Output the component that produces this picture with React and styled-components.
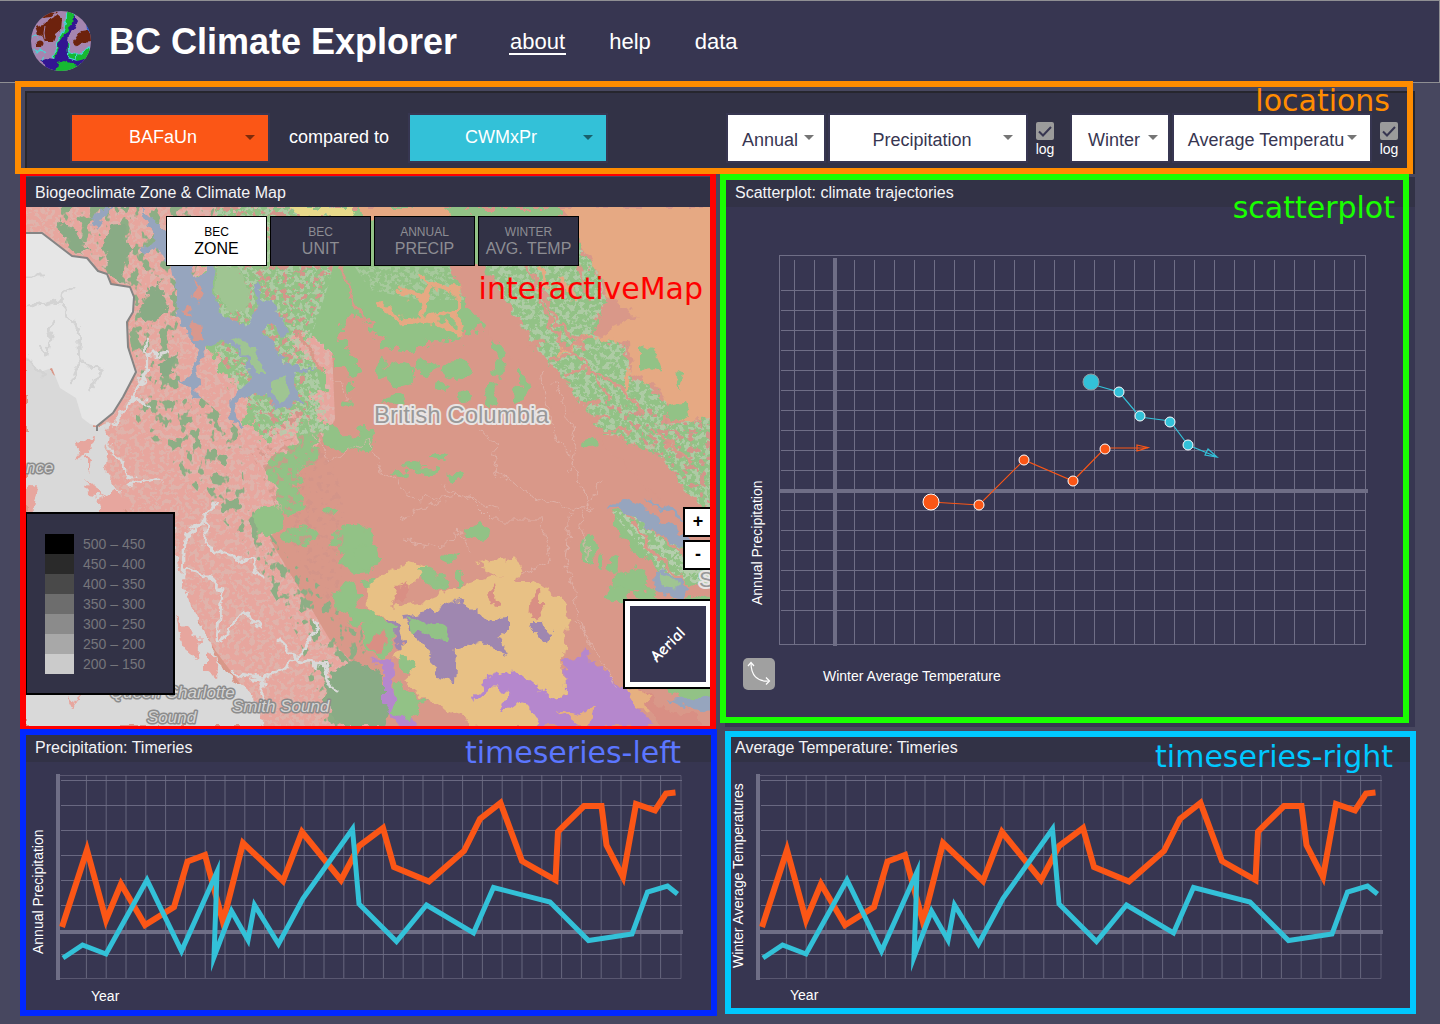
import React from 'react';
import styled, { createGlobalStyle } from 'styled-components';

const SANS = '"Liberation Sans", Arial, Helvetica, sans-serif';
const INDIGO = '#373651';
const SLATE = '#323246';
const ORANGE = '#fb5616';
const TEAL = '#33c1d8';
const GRID = '#6f6e86';

const GlobalStyle = createGlobalStyle`
  *, *::before, *::after { box-sizing: border-box; }
  body {
    margin: 0;
    background: #47475f;
    color: #fff;
    font-family: ${SANS};
  }
  button, select, input { font-family: inherit; margin: 0; }
`;

const Page = styled.div`
  min-height: 100vh;
  padding-bottom: 12px;
`;

const Header = styled.header`
  display: flex;
  align-items: center;
  height: 83px;
  padding: 0 30px;
  background: ${INDIGO};
  border: 1px solid #8f8f93;
  border-left: 0;
`;

const Brand = styled.h1`
  margin: 0 52px 0 17px;
  font-size: 36px;
  line-height: 40px;
  font-weight: 700;
  white-space: nowrap;
`;

const Nav = styled.nav`
  display: flex;
  gap: 42px;
`;

const NavLink = styled.a`
  padding: 2px 1px 0;
  font-size: 22px;
  line-height: 22px;
  color: #fff;
  text-decoration: none;
  border-bottom: 2px solid ${(p) => (p.$current ? '#fff' : 'transparent')};
`;

const Main = styled.main`
  display: grid;
  grid-template-columns: minmax(0, 1fr) minmax(0, 1fr);
  column-gap: 10px;
  row-gap: 5px;
  padding: 8px 25px 0;
`;

/* Coloured outline naming a region; it is drawn over the region's edges. */
const Outline = styled.div`
  position: absolute;
  inset: ${(p) => p.$inset};
  z-index: ${(p) => p.$level || 1};
  border: 6px solid ${(p) => p.$color};
  pointer-events: none;
`;

const OutlineLabel = styled.span`
  position: absolute;
  top: ${(p) => p.$top}px;
  right: ${(p) => p.$right}px;
  font-family: "DejaVu Sans", sans-serif;
  font-size: 30px;
  line-height: 30px;
  white-space: nowrap;
  color: ${(p) => p.$color};
`;

const Region = ({ name, color, ink, inset, top, right, level }) => (
  <Outline $inset={inset} $color={color} $level={level}>
    <OutlineLabel $color={ink || color} $top={top} $right={right}>{name}</OutlineLabel>
  </Outline>
);

const Locations = styled.section`
  position: relative;
  grid-column: 1 / -1;
  display: flex;
  align-items: flex-start;
  justify-content: space-between;
  height: 83px;
  padding: 22px 14px 0 45px;
  background: ${SLATE};
  border: 2px solid #26262e;
`;

const Group = styled.div`
  display: flex;
  align-items: flex-start;
  gap: ${(p) => p.$gap}px;
`;

const Joiner = styled.span`
  font-size: 18px;
  line-height: 44px;
`;

const SelectBox = styled.div`
  position: relative;
  width: ${(p) => (p.$small ? 96 : 196)}px;
  height: 46px;
  box-shadow: 0 0 0 2px ${INDIGO};
`;

const Select = styled.select`
  appearance: none;
  width: 100%;
  height: 100%;
  border: 0;
  border-radius: 0;
  padding: ${(p) => (p.$bg ? '0 14px 2px 0' : '4px 12px 0 0')};
  background: ${(p) => p.$bg || '#fff'};
  color: ${(p) => (p.$bg ? '#fff' : INDIGO)};
  font-size: 18px;
  line-height: 20px;
  text-align: center;
  text-align-last: center;
`;

const Caret = styled.svg`
  position: absolute;
  top: 20px;
  right: ${(p) => (p.$small ? 10 : 13)}px;
  width: 10px;
  height: 5px;
  pointer-events: none;
`;

const Picker = ({ label, value, bg, small }) => (
  <SelectBox $small={small}>
    <Select aria-label={label} defaultValue={value} $bg={bg}>
      <option>{value}</option>
    </Select>
    <Caret viewBox="0 0 10 5" $small={small} aria-hidden="true">
      <path d="M0 0H10L5 5Z" fill={bg ? '#000' : '#757575'} fillOpacity={bg ? 0.5 : 1} />
    </Caret>
  </SelectBox>
);

const LogLabel = styled.label`
  display: grid;
  justify-items: center;
  width: 20px;
  margin: 7px 0 0 3px;
  font-size: 14px;
  line-height: 19px;
`;

const LogInput = styled.input`
  appearance: none;
  grid-area: 1 / 1;
  width: 18px;
  height: 18px;
  border-radius: 2px;
  background: #9b9b9b;
`;

const Tick = styled.svg`
  grid-area: 1 / 1;
  width: 18px;
  height: 18px;
  pointer-events: none;
`;

const LogToggle = () => (
  <LogLabel>
    <LogInput type="checkbox" defaultChecked />
    <Tick viewBox="0 0 18 18" aria-hidden="true">
      <path d="M3 9.5L7 13.5L15 5" fill="none" stroke={INDIGO} strokeWidth="2" />
    </Tick>
    <span>log</span>
  </LogLabel>
);

const Panel = styled.section`
  position: relative;
  margin-top: ${(p) => (p.$raised ? -2 : 0)}px;
  background: ${INDIGO};
`;

const PanelTitle = styled.h2`
  margin: 0;
  height: 30px;
  padding: 0 10px;
  background: ${SLATE};
  font-size: 16px;
  line-height: 32px;
  font-weight: 400;
  color: #f4f4f6;
`;

const Drawing = styled.svg`
  display: block;
  width: 100%;
  height: auto;
  font-family: ${SANS};
`;

const MapBody = styled.div`
  position: relative;
  overflow: hidden;
`;

const LayerTabs = styled.div`
  position: absolute;
  top: 9px;
  left: 141px;
  display: flex;
  gap: 3px;
`;

const LayerTab = styled.button`
  display: flex;
  flex-direction: column;
  align-items: center;
  justify-content: center;
  gap: 1px;
  width: 101px;
  height: 50px;
  padding: 1px 0 0;
  border: 1px solid #000;
  background: ${(p) => (p.$active ? '#fff' : SLATE)};
  color: ${(p) => (p.$active ? '#000' : '#8d8d93')};
  font-size: 16px;
  line-height: 18px;
`;

const TabKicker = styled.span`
  font-size: 12px;
  line-height: 14px;
`;

const Legend = styled.ul`
  position: absolute;
  left: 0;
  bottom: 31px;
  width: 150px;
  height: 183px;
  margin: 0;
  padding: 20px 0 0 18px;
  border: 2px solid #000;
  background: ${SLATE};
  list-style: none;
`;

const LegendItem = styled.li`
  display: flex;
  gap: 9px;
  height: 20px;
  font-size: 14px;
  line-height: 20px;
  color: #75757b;
`;

const Swatch = styled.span`
  width: 29px;
  background: ${(p) => p.$color};
`;

const ZoomStack = styled.div`
  position: absolute;
  top: 300px;
  right: 0;
  display: grid;
  gap: 3px;
`;

const ZoomButton = styled.button`
  width: 32px;
  height: 30px;
  padding: 0 2px 2px 0;
  border: 2px solid #000;
  background: #fff;
  color: #000;
  font-size: 18px;
  line-height: 20px;
  font-weight: 700;
`;

const AerialButton = styled.button`
  position: absolute;
  top: 392px;
  right: 0;
  display: flex;
  width: 92px;
  height: 90px;
  padding: 5px 7px 5px 5px;
  border: 2px solid #000;
  background: #fff;
`;

const AerialView = styled.span`
  display: grid;
  place-items: center;
  flex: 1;
  background: ${INDIGO};
  color: #fff;
  font-family: "Comic Neue", "Comic Sans MS", Lato, sans-serif;
  font-size: 17px;
  font-weight: 700;
`;

const Tilted = styled.span`
  transform: rotate(-45deg);
`;

const CurveButton = styled.button`
  position: absolute;
  left: 18px;
  bottom: 37px;
  width: 32px;
  height: 32px;
  padding: 0;
  border: 0;
  border-radius: 5px;
  background: #a0a0a0;
`;

const LogoMark = styled.svg`
  flex: none;
  width: 62px;
  height: 62px;
`;

const Logo = () => (
  <LogoMark viewBox="-1 0 62 62" aria-hidden="true">
    <defs>
      <clipPath id="disc"><circle cx="30" cy="30" r="30" /></clipPath>
      <filter id="logoRough" x="-10%" y="-10%" width="120%" height="120%">
        <feTurbulence type="fractalNoise" baseFrequency="0.16" numOctaves="2" seed="4" />
        <feDisplacementMap in="SourceGraphic" scale="5" xChannelSelector="R" yChannelSelector="G" />
      </filter>
    </defs>
    <g clipPath="url(#disc)">
      <rect width="60" height="60" fill="#a585b0" />
      <g filter="url(#logoRough)" strokeWidth="1.2" stroke="#49d5d5">
        <path d="M36 -2L44 2L43 12L39 20L35 28L38 34L37 40L48 44L58 36L62 44L60 64L16 62L26 50L20 46L26 38L27 28L32 20L35 10Z" fill="#12b932" />
        <path d="M43 4L47 10L43 19L38 24L36 34L37 42L46 50L54 48L58 52L46 54L34 50L27 52L25 62L18 58L8 50L16 47L22 48L28 40L27 32L31 26L37 20L41 12Z" fill="#321492" stroke="none" />
        <path d="M36 42L46 42L45 49L38 47Z" fill="#12b932" />
        <path d="M11 7L16 0L26 1L20 6ZM4 15L12 13L19 8L26 4L31 8L30 19L25 23L22 31L15 31L13 25L7 23Z" fill="#6d2408" stroke="none" />
        <path d="M42 31L46 25L50 20L56 19L61 25L60 31L50 32L44 36Z" fill="#6d2408" stroke="none" />
        <circle cx="9" cy="33" r="3.5" fill="#6d2408" stroke="none" />
        <path d="M0 27L5 24L7 30M1 38L6 42L10 39L14 42M10 51L14 45" fill="none" />
      </g>
      <path d="M55 11L60 18L61 24L56 18Z" fill="#1a55dd" />
      <path d="M14 15L13 22L14 28" stroke="#a585b0" fill="none" />
    </g>
  </LogoMark>
);

const SPECKS = [
  { id: 'spkDark', color: '#8dae85', freq: '0.1 0.08', seed: 3, cut: -8.9, gain: 16 },
  { id: 'spkGrey', color: '#d9c0b8', freq: '0.2', seed: 8, cut: -7.6, gain: 15 },
  { id: 'spkRed', color: '#d3958a', freq: '0.17', seed: 15, cut: -8.6, gain: 15 },
  { id: 'spkPale', color: '#b4ceac', freq: '0.2', seed: 21, cut: -7.4, gain: 15 },
];

const ISLETS = [
  [345, 444, 16, 7], [332, 436, 8, 10], [308, 432, 12, 14], [302, 455, 16, 12], [284, 470, 18, 18], [290, 500, 14, 16],
  [268, 520, 14, 16], [300, 535, 18, 10], [352, 540, 22, 14], [360, 560, 18, 12], [330, 512, 7, 5], [347, 598, 13, 16],
  [362, 616, 16, 8], [366, 440, 9, 13], [382, 370, 6, 10], [400, 374, 14, 12], [426, 368, 11, 7], [456, 370, 16, 9],
  [440, 388, 6, 6], [466, 396, 7, 6], [394, 400, 10, 6], [502, 344, 10, 14], [500, 368, 8, 10], [525, 372, 6, 18],
  [520, 394, 8, 8], [490, 396, 6, 12], [440, 456, 9, 4], [412, 465, 10, 4], [426, 471, 12, 4], [400, 474, 8, 3],
  [455, 477, 8, 4], [478, 532, 13, 8], [366, 556, 12, 12], [370, 584, 9, 4], [424, 572, 10, 6], [440, 584, 9, 8],
  [459, 578, 4, 9], [450, 558, 7, 6], [589, 548, 7, 14], [601, 562, 3, 9], [614, 566, 5, 9], [632, 580, 17, 12],
  [618, 594, 12, 10], [646, 596, 12, 8], [558, 399, 4, 3], [590, 442, 9, 5], [347, 404, 4, 3], [350, 388, 4, 3],
];

const AREA = {
  coast: 'M97 431L134 380L128 330L134 296L108 276L60 250L25 232V207H345L330 300L335 420L300 470L270 540L330 640L370 680L380 727H258L245 690L215 650L186 600L120 500L104 470Z',
  coastForest: 'M60 207H215L196 270L176 330L180 380L240 430L245 500L290 560L360 620L380 727H320L300 640L240 540L170 460L136 420L136 372L128 330L130 285L60 240Z',
  inlandGreen: 'M215 207H560L545 250L500 270L510 300L480 330L450 340L420 345L408 352L382 348L372 325L350 312L338 330L360 370L352 382L320 340L300 330L290 345L310 365L325 370L330 390L310 395L325 425L340 440L335 445L308 420L300 410L280 425L265 440L258 428L245 425L246 400L225 370L205 345L212 300L200 290L214 230Z',
  rockies: 'M486 266L520 250L575 240L600 275L606 300L590 334L625 345L632 375L668 400L660 425L715 417V510L690 505L650 450L594 430L567 384L533 350L505 302Z',
  orange: 'M560 207H715V418L671 421L661 388L632 372L628 344L594 338L636 316L607 294L597 270L573 227Z',
};

const ClimateMap = () => (
  <Drawing viewBox="25 207 690 519" role="img" aria-label="Map of British Columbia coloured by zone">
    <defs>
      <filter id="rough" x="-5%" y="-5%" width="110%" height="110%">
        <feTurbulence type="fractalNoise" baseFrequency="0.09" numOctaves="3" seed="7" />
        <feDisplacementMap in="SourceGraphic" scale="14" xChannelSelector="R" yChannelSelector="G" />
      </filter>
      <filter id="ragged" x="-5%" y="-5%" width="110%" height="110%">
        <feTurbulence type="fractalNoise" baseFrequency="0.12" numOctaves="3" seed="12" />
        <feDisplacementMap in="SourceGraphic" scale="24" xChannelSelector="R" yChannelSelector="G" />
      </filter>
      {SPECKS.map((s) => (
        <filter key={s.id} id={s.id} x="0" y="0" width="100%" height="100%" colorInterpolationFilters="sRGB">
          <feTurbulence type="fractalNoise" baseFrequency={s.freq} numOctaves="3" seed={s.seed} />
          <feColorMatrix values={`0 0 0 0 0  0 0 0 0 0  0 0 0 0 0  ${s.gain} 0 0 0 ${s.cut}`} result="m" />
          <feFlood floodColor={s.color} />
          <feComposite in2="m" operator="in" result="f" />
          <feComposite in="f" in2="SourceGraphic" operator="in" />
        </filter>
      ))}
    </defs>

    <rect x="25" y="207" width="690" height="520" fill="#d99889" />
    <path d={AREA.coast} fill="#e7a69e" />
    <path d={AREA.coast} fill="#000" filter="url(#spkGrey)" opacity="0.5" />
    <path d={AREA.coastForest} fill="#000" filter="url(#spkDark)" />
    <g filter="url(#rough)" fill="#89ab85">
      <path d="M108 227L125 225L130 250L122 285L112 275L104 250ZM150 290L162 285L168 310L155 322L140 318L138 308ZM160 365L178 355L172 372L160 376ZM60 222L75 230L90 250L78 252L62 238Z" />
      <path d="M350 660L375 668L395 700L385 727H345L322 700L332 676Z" />
    </g>

    <g filter="url(#ragged)">
      <path d={AREA.inlandGreen} fill="#92c286" />
      <path d={AREA.rockies} fill="#92c286" />
    </g>
    <g filter="url(#rough)" fill="#92c286">
      {ISLETS.map(([x, y, rx, ry]) => <ellipse key={`${x}-${y}`} cx={x} cy={y} rx={rx} ry={ry} />)}
      <path d="M612 512L632 508L662 528L690 548L715 562V580L690 585L660 572L634 550L618 534ZM668 600L700 596L715 600V625H690Z" />
      <path d="M640 660L715 690V712L680 700Z" />
    </g>
    <path d="M215 207H345L330 280L310 340L330 430L265 440L246 400L215 350Z" fill="#000" filter="url(#spkPale)" opacity="0.8" />
    <path d="M215 207H345L330 280L300 340L310 420L265 440L246 400L215 350Z" fill="#000" filter="url(#spkRed)" />
    <path d="M258 300L282 290L300 330L284 350Z" fill="#000" filter="url(#spkRed)" />
    <path d={AREA.rockies} fill="#000" filter="url(#spkPale)" opacity="0.8" />
    <path d="M355 267H450L465 300L420 300L370 290Z" fill="#000" filter="url(#spkPale)" opacity="0.6" />
    <path d="M250 450L320 430L345 500L340 620L300 560Z" fill="#000" filter="url(#spkRed)" opacity="0.7" />
    <path d="M600 400L715 420V510L660 460Z" fill="#000" filter="url(#spkRed)" />
    <path d="M612 512L632 508L715 562V590L660 572Z" fill="#000" filter="url(#spkPale)" />

    <g filter="url(#rough)">
      <path d={AREA.orange} fill="#e6a983" />
      <path d="M360 207H446L452 222H400L362 216Z" fill="#e6a983" />
      <path d="M290 207H355L350 220L325 216L300 220Z" fill="#e8d98a" />
      <path d="M640 345L655 350L662 372L650 366L640 372ZM676 372L684 376L680 392ZM662 405L684 402L690 415L672 422Z" fill="#92c286" />
      <path d="M448 262L482 264L512 310L540 353L575 395L606 434L660 456L700 505L715 520L690 530L650 492L600 440L560 420L500 345L470 310Z" fill="#d99889" />
      <g fill="none" stroke="#e6a983" strokeLinecap="round">
        <path d="M381 302L400 322L432 320L460 334M458 288L457 330M400 290L425 300L422 320L440 314L458 318M425 300L430 284L418 274M430 284L458 290" strokeWidth="5" />
        <path d="M540 266L548 290M560 280L575 300M590 338L570 346L560 352M630 372L626 392" strokeWidth="4" />
      </g>
      <g fill="none" stroke="#d99889" strokeWidth="3">
        <path d="M540 300L560 340L590 370L610 400M560 348L592 338M590 370L620 385L645 415M545 340L530 345M600 400L575 410M630 430L600 432M520 250L555 320L585 350M650 430L690 460M550 360L572 352M565 376L585 368M610 420L590 418M575 258L590 300" />
        <path d="M318 216L340 262L352 300L366 326M298 330L322 372M620 500L650 548L690 590M636 515L690 560" />
      </g>
    </g>

    <g filter="url(#rough)" fill="#96a5be">
      <path d="M170 258L193 260L196 277L205 275V260H215L213 300L220 313L247 327L253 317L258 306L253 283L258 280L262 300L273 303L288 333L283 337L273 327H260L268 340L280 357L293 367L317 367L293 372L296 386L303 403L293 403L287 410L270 407L268 393L250 393L237 403L235 413L241 427L232 420L228 403L237 393L250 377L240 353L225 340L207 348L197 367L199 397L194 400L192 385L177 383L188 378L198 353L192 340L177 317L176 290Z" />
      <path d="M90 218L105 207H112L96 228ZM140 207L168 232L172 262L160 256L150 228ZM172 235L145 255L140 250L165 235ZM606 505L622 500L650 512L684 536L715 550V558L680 548L650 528L625 512Z" />
      <path d="M654 570L664 568L690 590L680 600L655 590ZM642 498L668 512L706 532L670 508ZM668 700L715 695V712L690 710Z" />
    </g>
    <g filter="url(#rough)">
      <path d="M190 298L198 280L203 290L198 302ZM180 312L188 306L192 318ZM190 322L202 325L204 340L194 338Z" fill="#d9988d" />
      <path d="M232 338L250 342L262 360L268 374L258 374L244 356ZM272 382L286 378L290 396L280 402L272 396ZM660 572L672 578L680 588L662 586ZM218 262L240 270L250 290L246 312L232 314L216 296Z" fill="#9fc592" />
      <path d="M640 690L665 710L700 716V726H660Z" fill="#d98f84" />
    </g>

    <g filter="url(#rough)">
      <path d="M367 588L383 573L415 563L428 567L413 582L390 607L420 603L450 590L493 575L503 580L477 563L513 558L522 567L517 580H533L560 597L570 617L565 633L563 660L567 690L557 700L545 727H475L457 713L427 700L403 682L413 673L393 657L403 647L393 620L377 617L368 607Z" fill="#e8c185" />
      <path d="M405 615L430 612L458 598L477 610L488 620L508 617V630L498 637L507 653L487 645L478 643L457 650L455 683L440 678L433 660L425 645L408 628ZM530 622H540L543 630L552 632L548 642L533 633ZM385 618L397 622L404 648L398 644Z" fill="#9f87b0" />
      <path d="M473 702L487 677L517 670L557 700L566 692L565 660L582 656L583 646L590 658L623 687L653 727H541L527 708L512 704L500 712L508 690L490 688ZM368 660L392 658L394 700L420 727H400L384 704L384 668Z" fill="#b587cd" />
      <path d="M400 655L415 664L410 674L398 668ZM395 682L425 700L410 722L392 712Z" fill="#92c286" />
      <path d="M362 625L380 618L393 626L394 650L380 658L362 645Z" fill="#92c286" />
      <path d="M366 642L384 630L388 642L376 654ZM488 592L494 585L498 604L490 608ZM532 596L540 590L542 616L530 620ZM398 588L410 582L405 594L395 606Z" fill="#d98f84" />
      <path d="M408 618L417 617L428 628L441 621L450 632L448 642L437 640L425 632L412 634ZM414 568L430 568L444 584L440 592L430 584Z" fill="#92c286" />
      <path d="M556 710L580 716L594 704L590 727H580ZM623 687L645 694L650 712L636 706Z" fill="#e6b080" />
    </g>

    <g fill="none" stroke="#dfb5ad" strokeWidth="1" filter="url(#rough)" opacity="0.8">
      <path d="M480 430L500 445L492 455L498 475L540 500L590 512L572 460L552 430L540 370M570 512L565 560L580 620L590 650M600 480L580 520L590 560M370 440L380 470L420 500L460 495L500 510M440 485L470 500L490 520L540 520L552 560L520 575M300 410L330 460L370 440M335 380L350 400M575 620L600 660L620 690M400 520L440 500M405 540L440 548L460 530L470 550M555 380L575 440L570 470" />
    </g>

    <g filter="url(#rough)">
      <path d="M25 340L50 370L62 378L84 395L97 428L110 424L106 440L104 470L118 488L126 500L104 500L112 520L175 520L176 560L190 604L200 625L218 655L222 668L232 676L250 690L262 727H25Z" fill="#d9d9d9" />
      <g fill="#e7a69e">
        <path d="M76 442L92 438L90 450L78 458ZM84 456L94 460L92 470ZM84 480L104 496L90 494ZM176 616L200 640L198 660L184 648ZM206 652L218 656L216 676L206 670ZM68 696L78 700L74 708ZM98 500L115 488L130 500L120 520H100ZM25 490L38 484L32 515H25Z" />
      </g>
      <g fill="none" stroke="#d9d9d9" strokeLinecap="round" strokeLinejoin="round">
        <path d="M213 503L206 520L184 538L182 575M184 570L208 575L222 590L218 640M222 640L240 615L248 612L260 628M206 520L204 545L234 556L250 560L262 578M232 672L262 678L298 660L318 625L314 618M298 660L325 665L334 690M262 678V705M112 425L132 400L148 402M132 400L148 370L146 340M148 355L165 352M105 440L132 478M130 486L160 480M298 660L278 640" strokeWidth="3" />
      </g>
    </g>
    <path d="M25 233H42L72 256L87 258L98 271L107 274L111 284L130 287L134 297L133 312L127 322L128 347L136 372L123 397L113 413L97 426L90 424L82 418L76 398L60 388L52 368L40 372L25 356Z" fill="#e6e6e6" />
    <g fill="none" stroke="#d3d3d3" strokeWidth="3" strokeLinejoin="round" filter="url(#rough)">
      <path d="M25 308L58 300L74 286M58 300L78 328L80 362L104 370M80 362L70 385M25 276H44M25 356L44 376M104 370L90 390M54 320L46 355L40 348" />
    </g>
    <path d="M25 233H42L72 256L87 258L98 271L107 274L111 284L130 287L134 297L133 312L127 322L128 347L136 372L123 397L113 413L97 426V431" fill="none" stroke="#858585" strokeWidth="2" strokeLinejoin="round" />

    <g paintOrder="stroke" strokeLinejoin="round" strokeWidth="4">
      <text x="374" y="423" fontSize="24" fill="#999" stroke="#e8e4e3">British Columbia</text>
      <text x="699" y="587" fontSize="22" fill="#999" stroke="#e8e4e3">S</text>
      <g fontStyle="italic" fontSize="17" fill="#d4d4d4" stroke="#8c8c8c" strokeWidth="3">
        <text x="26" y="473">nce</text>
        <text x="110" y="698">Queen Charlotte</text>
        <text x="147" y="723">Sound</text>
        <text x="232" y="712">Smith Sound</text>
      </g>
    </g>
  </Drawing>
);

const range = (from, to, step) => {
  const out = [];
  for (let v = from; v <= to + 0.01; v += step) out.push(v);
  return out;
};

const WARMER = [[931, 502], [979, 505], [1024, 460], [1073, 481], [1105, 449]];
const WETTER = [[1091, 382], [1119, 392], [1140, 416], [1170, 422], [1188, 445]];

const Scatter = () => (
  <Drawing viewBox="725 207 690 520" role="img" aria-label="Scatterplot of climate trajectories">
    <g stroke={GRID} fill="none">
      <rect x="779.5" y="255.5" width="586" height="389" />
      {range(794.5, 1354.5, 20).map((x) => <path key={x} d={`M${x} 260V644`} />)}
      {[...range(290.5, 470.5, 20), ...range(510.5, 610.5, 20)].map((y) => <path key={y} d={`M781 ${y}H1366`} />)}
      <path d="M835 258V646M780 491H1368" strokeWidth="4" />
    </g>
    <path d="M931 502L979 505L1024 460L1073 481L1105 448H1148M1137 445L1148 447.5L1137 451Z" fill="none" stroke={ORANGE} strokeWidth="1.2" />
    <path d="M1091 384L1119 392L1140 417L1170 421L1188 445L1217 457M1208 449L1217 457L1205 455Z" fill="none" stroke={TEAL} strokeWidth="1.2" />
    {WARMER.map(([x, y], i) => <circle key={x} cx={x} cy={y} r={i ? 5 : 8} fill={ORANGE} stroke="#fff" />)}
    {WETTER.map(([x, y], i) => <circle key={x} cx={x} cy={y} r={i ? 5 : 8} fill={TEAL} stroke={i ? '#fff' : '#8f9aa0'} />)}
    <g fill="#fff" fontSize="14">
      <text x="823" y="681">Winter Average Temperature</text>
      <text transform="translate(762 605) rotate(-90)">Annual Precipitation</text>
    </g>
  </Drawing>
);

const FIRST = '62,927 87,850 106,920 121,884 145,925 174,907 187.5,861.5 205,855 223,922 243,843 283,881 302,832 341,880 359,846 383,828 394,867 429,881.5 464,851 480,819 500.5,803 522,861 555.5,880 558,831.5 584,806 601.5,806 606.5,845 623,877 636,804 655,810.5 666,793.5 675.5,792.5';
const SECOND = '63,958 82.5,945 106,954 147,880 181.5,951 217,872 214,957 231.5,911 248,940 254.5,905 278.5,944 303,898.5 352.5,829 359,904 396.5,941.5 426.5,905 473.5,933 493.5,887.5 550,902 588.5,940.5 632,934 647.5,892 667.5,886 677.5,894';

const Timeseries = ({ yLabel, yStart, yearAt }) => (
  <Drawing viewBox="25 762 690 250" role="img" aria-label={`${yLabel} by year`}>
    <g stroke={GRID} fill="none">
      <path d="M56 775.5H681V978.5H56" opacity="0.6" />
      {range(86.4, 662, 19.8).map((x) => <path key={x} d={`M${x} 775V978`} opacity="0.85" />)}
      {[780.5, 805.5, 830.5, 855.5, 880.5, 905.5, 954.5].map((y) => <path key={y} d={`M61 ${y}H682`} opacity="0.9" />)}
      <path d="M58 774V980M60 932H683" strokeWidth="4" />
    </g>
    <polyline points={FIRST} fill="none" stroke={ORANGE} strokeWidth="6" strokeMiterlimit="10" />
    <polyline points={SECOND} fill="none" stroke={TEAL} strokeWidth="5" strokeMiterlimit="14" />
    <g fill="#fff" fontSize="14">
      <text x={yearAt[0]} y={yearAt[1]}>Year</text>
      <text transform={`translate(43 ${yStart}) rotate(-90)`}>{yLabel}</text>
    </g>
  </Drawing>
);

const TABS = [['BEC', 'ZONE'], ['BEC', 'UNIT'], ['ANNUAL', 'PRECIP'], ['WINTER', 'AVG. TEMP']];

const RAMP = [
  ['#000000', '500 – 450'], ['#2a2a2a', '450 – 400'], ['#494949', '400 – 350'], ['#6d6d6d', '350 – 300'],
  ['#8b8b8b', '300 – 250'], ['#a8a8a8', '250 – 200'], ['#cbcbcb', '200 – 150'],
];

export default function App() {
  return (
    <Page>
      <GlobalStyle />
      <Header>
        <Logo />
        <Brand>BC Climate Explorer</Brand>
        <Nav>
          <NavLink href="#about" $current>about</NavLink>
          <NavLink href="#help">help</NavLink>
          <NavLink href="#data">data</NavLink>
        </Nav>
      </Header>
      <Main>
        <Locations>
          <Group $gap={21}>
            <Picker label="First location" value="BAFaUn" bg={ORANGE} />
            <Joiner>compared to</Joiner>
            <Picker label="Second location" value="CWMxPr" bg={TEAL} />
          </Group>
          <Group $gap={17}>
            <Group $gap={6}>
              <Picker label="First season" value="Annual" small />
              <Picker label="First variable" value="Precipitation" />
              <LogToggle />
            </Group>
            <Group $gap={6}>
              <Picker label="Second season" value="Winter" small />
              <Picker label="Second variable" value="Average Temperatu" />
              <LogToggle />
            </Group>
          </Group>
          <Region name="locations" color="#ff8c00" inset="-12px 0 -2px -12px" top={-1} right={17} level={3} />
        </Locations>

        <Panel $raised>
          <PanelTitle>Biogeoclimate Zone &amp; Climate Map</PanelTitle>
          <MapBody>
            <ClimateMap />
            <LayerTabs>
              {TABS.map(([kicker, name], i) => (
                <LayerTab key={name} type="button" $active={i === 0}>
                  <TabKicker>{kicker}</TabKicker>
                  {name}
                </LayerTab>
              ))}
            </LayerTabs>
            <Legend>
              {RAMP.map(([color, text]) => (
                <LegendItem key={text}><Swatch $color={color} />{text}</LegendItem>
              ))}
            </Legend>
            <ZoomStack>
              <ZoomButton type="button" aria-label="Zoom in">+</ZoomButton>
              <ZoomButton type="button" aria-label="Zoom out">-</ZoomButton>
            </ZoomStack>
            <AerialButton type="button"><AerialView><Tilted>Aerial</Tilted></AerialView></AerialButton>
          </MapBody>
          <Region name="interactiveMap" color="#ff0000" inset="-7px -1px -5px -5px" top={98} right={7} />
        </Panel>

        <Panel $raised>
          <PanelTitle>Scatterplot: climate trajectories</PanelTitle>
          <Scatter />
          <CurveButton type="button" aria-label="Show trajectories">
            <svg width="32" height="32" viewBox="0 0 32 32" fill="none" stroke="#fff" aria-hidden="true">
              <path d="M8 5C8 17 14 24 26 23" strokeWidth="1.2" />
              <path d="M5 8L8 4.5L11 8M23 19.5L26.500 23L23 26.5" strokeWidth="1.2" />
            </svg>
          </CurveButton>
          <Region name="scatterplot" color="#19ff00" inset="-3px 6px 4px -5px" top={13} right={8} />
        </Panel>

        <Panel>
          <PanelTitle>Precipitation: Timeries</PanelTitle>
          <Timeseries yLabel="Annual Precipitation" yStart={954} yearAt={[91, 1001]} />
          <Region name="timeseries-left" color="#0027ff" ink="#5b76ff" inset="-3px -2px -4px -5px" top={3} right={30} level={2} />
        </Panel>

        <Panel>
          <PanelTitle>Average Temperature: Timeries</PanelTitle>
          <Timeseries yLabel="Winter Average Temperatures" yStart={968} yearAt={[90, 1000]} />
          <Region name="timeseries-right" color="#00c8ff" inset="-1px -1px -2px 0" top={5} right={17} level={2} />
        </Panel>
      </Main>
    </Page>
  );
}
